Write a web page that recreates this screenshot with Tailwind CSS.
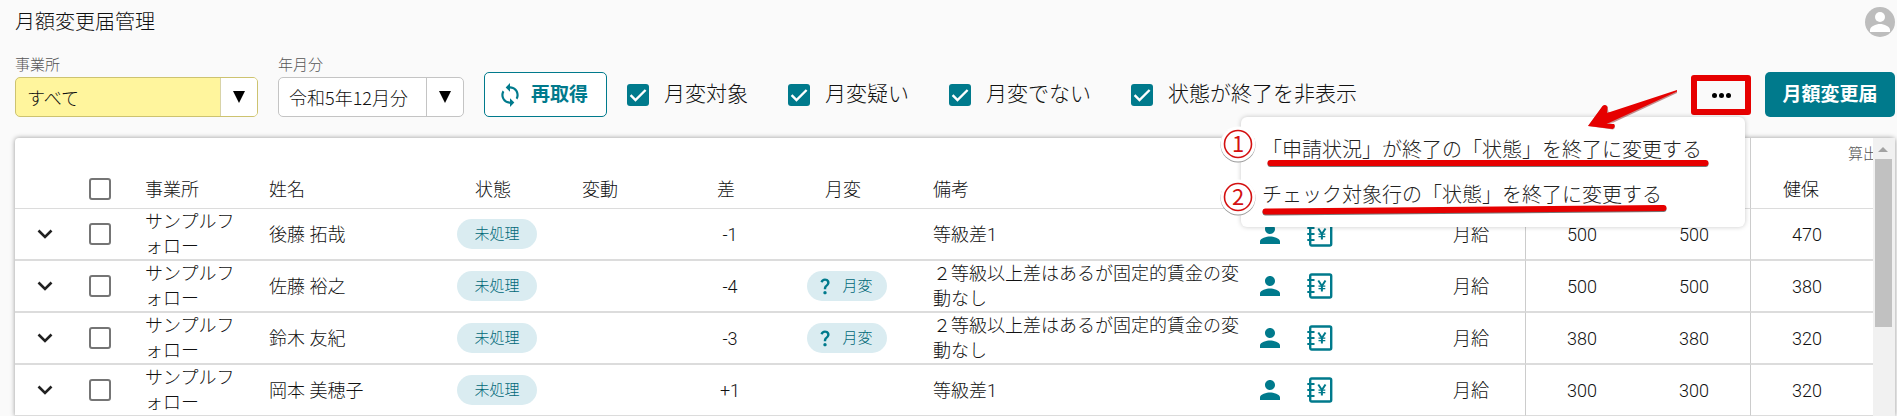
<!DOCTYPE html>
<html lang="ja">
<head>
<meta charset="utf-8">
<title>月額変更届管理</title>
<script src="https://cdn.jsdelivr.net/npm/@tailwindcss/browser@4"></script>
</head>
<body class="min-h-screen overflow-hidden bg-[#fafafa] font-['Roboto','Noto_Sans_CJK_JP',sans-serif] font-light text-[#111]">

<svg class="hidden" aria-hidden="true">
  <symbol id="chevron" viewBox="0 0 16 10"><path d="M1.5 1.5 8 8l6.500-6.500" fill="none" stroke="#212121" stroke-width="2.600"/></symbol>
  <symbol id="person" viewBox="0 0 24 24"><path fill="#007a8c" d="M12 12c2.21 0 4-1.79 4-4s-1.79-4-4-4-4 1.79-4 4 1.79 4 4 4zm0 2c-2.67 0-8 1.34-8 4v2h16v-2c0-2.66-5.33-4-8-4z"/></symbol>
  <symbol id="ledger" viewBox="0 0 26 26">
    <rect x="3.200" y="1.500" width="21" height="23" rx="1.500" fill="none" stroke="#007a8c" stroke-width="2.400"/>
    <path d="M.3 7H7.500M.3 13H7.500M.3 19H7.500" stroke="#007a8c" stroke-width="2"/>
    <path d="M11.300 7.500l3.600 5.500 3.600-5.500M14.900 12.500V18.500" fill="none" stroke="#007a8c" stroke-width="2"/>
    <path d="M11.500 13.200h6.800M11.500 15.700h6.800" stroke="#007a8c" stroke-width="1.200"/>
  </symbol>
  <symbol id="question" viewBox="0 0 24 24"><path fill="#007a8c" d="M11.070 12.850c.77-1.390 2.250-2.210 3.110-3.440.91-1.290.4-3.700-2.180-3.700-1.690 0-2.520 1.280-2.870 2.340L6.540 6.960C7.250 4.830 9.180 3 11.990 3c2.350 0 3.960 1.070 4.780 2.410.7 1.150 1.110 3.300.03 4.900-1.200 1.770-2.350 2.310-2.970 3.450-.25.46-.35.76-.35 2.240h-2.890c-.01-.78-.13-2.050.48-3.150zM14 20c0 1.100-.9 2-2 2s-2-.9-2-2 .9-2 2-2 2 .9 2 2z"/></symbol>
  <symbol id="tick" viewBox="0 0 22 22"><path d="M3.600 11.200l4.900 4.900L18.600 6" fill="none" stroke="#fff" stroke-width="2.400"/></symbol>
  <symbol id="down" viewBox="0 0 12 12"><path d="M0 0h12L6 12z"/></symbol>
</svg>

<header class="flex h-[54px] items-start justify-between pt-[7px] pr-[2px] pl-[15px]">
  <h1 class="text-[20px] leading-[30px]">月額変更届管理</h1>
  <button type="button" aria-label="アカウント">
    <svg class="size-[30px]" viewBox="0 0 30 30"><circle cx="15" cy="15" r="15" fill="#bdbdbd"/><circle cx="15" cy="10" r="5" fill="#fff"/><path d="M5 25v-2c0-3.500 6-6 10-6s10 2.500 10 6v2z" fill="#fff"/></svg>
  </button>
</header>

<div class="flex items-end gap-5 pr-[2px] pl-[15px]">
  <div class="w-[243px]">
    <label for="office" class="block text-[15px] leading-[23px] text-[#555]">事業所</label>
    <div class="flex h-10 overflow-hidden rounded-[5px] border border-[#cdc370] bg-[#fff59d]">
      <select id="office" class="min-w-0 flex-1 appearance-none pl-[11px] font-['Noto_Sans_CJK_JP',sans-serif] text-[18px]"><option>すべて</option></select>
      <span class="flex w-[37px] items-center justify-center border-l border-[#d8d3a8] bg-white"><svg class="size-3"><use href="#down"/></svg></span>
    </div>
  </div>
  <div class="w-[186px]">
    <label for="month" class="block text-[15px] leading-[23px] text-[#555]">年月分</label>
    <div class="flex h-10 overflow-hidden rounded-[5px] border border-[#c4c4c4] bg-white">
      <select id="month" class="min-w-0 flex-1 appearance-none pl-[10px] font-['Noto_Sans_CJK_JP',sans-serif] text-[18px]"><option>令和5年12月分</option></select>
      <span class="flex w-[37px] items-center justify-center border-l border-[#c4c4c4]"><svg class="size-3"><use href="#down"/></svg></span>
    </div>
  </div>
  <button type="button" class="flex h-[45px] w-[123px] items-center gap-2 rounded-[5px] border border-[#007a8c] bg-white pt-px pl-3 text-[19px] font-bold text-[#007a8c]">
    <svg class="size-[26px]" viewBox="0 0 24 24" fill="currentColor"><path d="M12 4V1L8 5l4 4V6c3.310 0 6 2.690 6 6 0 1.010-.25 1.970-.7 2.800l1.460 1.460C19.540 15.030 20 13.570 20 12c0-4.420-3.580-8-8-8zm0 14c-3.310 0-6-2.690-6-6 0-1.010.25-1.970.7-2.800L5.240 7.740C4.460 8.970 4 10.430 4 12c0 4.420 3.580 8 8 8v3l4-4-4-4v3z"/></svg>
    再取得
  </button>
  <div class="flex h-[45px] items-center gap-10 text-[21px]">
    <label class="flex items-center gap-[15px]"><span class="grid"><input type="checkbox" checked class="col-start-1 row-start-1 size-[22px] appearance-none rounded-[3px] bg-[#007a8c]"><svg class="pointer-events-none col-start-1 row-start-1 size-[22px]"><use href="#tick"/></svg></span>月変対象</label>
    <label class="flex items-center gap-[15px]"><span class="grid"><input type="checkbox" checked class="col-start-1 row-start-1 size-[22px] appearance-none rounded-[3px] bg-[#007a8c]"><svg class="pointer-events-none col-start-1 row-start-1 size-[22px]"><use href="#tick"/></svg></span>月変疑い</label>
    <label class="flex items-center gap-[15px]"><span class="grid"><input type="checkbox" checked class="col-start-1 row-start-1 size-[22px] appearance-none rounded-[3px] bg-[#007a8c]"><svg class="pointer-events-none col-start-1 row-start-1 size-[22px]"><use href="#tick"/></svg></span>月変でない</label>
    <label class="flex items-center gap-[15px]"><span class="grid"><input type="checkbox" checked class="col-start-1 row-start-1 size-[22px] appearance-none rounded-[3px] bg-[#007a8c]"><svg class="pointer-events-none col-start-1 row-start-1 size-[22px]"><use href="#tick"/></svg></span>状態が終了を非表示</label>
  </div>

  <div class="ml-auto flex gap-[14px]">
    <div class="relative z-10 pt-[3px]">
      <button type="button" aria-label="その他の操作" aria-expanded="true" class="flex h-10 w-[60px] items-center justify-center gap-[2px] rounded-[3px] border-[6px] border-[#e60000] bg-[#fafafa]">
        <span class="size-[5px] rounded-full bg-black"></span><span class="size-[5px] rounded-full bg-black"></span><span class="size-[5px] rounded-full bg-black"></span>
      </button>
      <div class="absolute top-[45px] right-[6px] w-[504px] rounded-md bg-white py-[10px] text-[20px] text-[#222] shadow-[0_0_5px_rgba(0,0,0,0.22)]" role="menu">
        <button type="button" role="menuitem" class="block h-[45px] w-full pl-[21px] text-left whitespace-nowrap">「申請状況」が終了の「状態」を終了に変更する</button>
        <button type="button" role="menuitem" class="block h-[45px] w-full pl-[21px] text-left whitespace-nowrap">チェック対象行の「状態」を終了に変更する</button>
        <svg class="pointer-events-none absolute inset-0 size-full overflow-visible" viewBox="1241 117 504 110">
          <g stroke-linecap="round" fill="none">
            <path d="M1270.500 164h435M1265.500 212.500l398-3.500" stroke="#777" stroke-width="6"/>
            <path d="M1270.500 163h435M1265.500 211.500l398-3.500" stroke="#e60000" stroke-width="6"/>
          </g>
          <path d="M1677 91 1611 114l1-1.500 -3.500-.5 -1-5.500q-2.500-3-5 0L1588 126l25 3.500q3-1.500 1.500-5l-5-1.500 4-.5L1677 93z" fill="#8a2020" opacity=".5"/>
          <path d="M1677 90 1607 113l.5-6q-2-3.500-5-1L1588 126l24.500 3q3.500-2 1.500-5h-7.500L1677 91.500z" fill="#e60000"/>
          <g font-size="22" font-weight="400" text-anchor="middle" fill="#d41111">
            <circle cx="1238" cy="145" r="17.500" fill="#999"/><circle cx="1238" cy="144" r="17.500" fill="#fff"/>
            <circle cx="1238" cy="144" r="13.500" fill="#fff" stroke="#d41111" stroke-width="1.600"/>
            <text x="1238" y="152" font-family="Noto Sans CJK JP">1</text>
            <circle cx="1238" cy="198" r="17.500" fill="#999"/><circle cx="1238" cy="197" r="17.500" fill="#fff"/>
            <circle cx="1238" cy="197" r="13.500" fill="#fff" stroke="#d41111" stroke-width="1.600"/>
            <text x="1238" y="205" font-family="Noto Sans CJK JP">2</text>
          </g>
        </svg>
      </div>
    </div>
    <button type="button" class="h-[45px] w-[130px] rounded-[5px] bg-[#007a8c] pt-[2px] text-[19px] font-bold text-white">月額変更届</button>
  </div>
</div>

<main class="mt-[21px] mr-[2px] ml-[15px] flex rounded-t-[4px] bg-white shadow-[0_0_5px_rgba(0,0,0,0.4)]">
  <div class="min-w-0 flex-1 overflow-hidden">
    <table class="w-[calc(100%+102px)] table-fixed border-separate border-spacing-0 text-[18px] leading-[25px] [line-break:anywhere] [&_tbody_td]:h-[52px] [&_tbody_td]:border-y [&_tbody_td]:border-[#dcdcdc] [&_td]:p-0 [&_th]:p-0 [&_th]:font-light">
      <colgroup>
        <col class="w-[60px]"><col class="w-[50px]"><col class="w-[124px]"><col class="w-[200px]"><col class="w-[96px]"><col class="w-[118px]"><col class="w-[134px]"><col class="w-[100px]"><col><col class="w-[44px]"><col class="w-[56px]"><col class="w-[177px]"><col class="w-[113px]"><col class="w-[112px]"><col class="w-[113px]"><col class="w-[112px]">
      </colgroup>
      <thead>
        <tr class="h-8 text-[15px] text-[#555]">
          <td colspan="12"></td>
          <td colspan="2" class="border-l border-[#ccc]"></td>
          <th colspan="2" scope="colgroup" class="border-l border-[#ccc]">算出</th>
        </tr>
        <tr class="h-[38px]">
          <td></td>
          <td><input type="checkbox" aria-label="すべて選択" class="mx-auto block size-[22px] appearance-none rounded-[3px] border-2 border-[#757575] bg-white"></td>
          <th scope="col"><div class="pl-5 text-left">事業所</div></th>
          <th scope="col"><div class="pl-5 text-left">姓名</div></th>
          <th scope="col"><div class="pr-2">状態</div></th>
          <th scope="col"><div class="pr-2">変動</div></th>
          <th scope="col"><div class="pr-2">差</div></th>
          <th scope="col"><div class="pr-2">月変</div></th>
          <th scope="col"><div class="pl-9 text-left">備考</div></th>
          <td></td><td></td><td></td>
          <td class="border-l border-[#ccc]"></td><td></td>
          <th scope="col" class="border-l border-[#ccc]"><div class="pr-3">健保</div></th>
          <td></td>
        </tr>
      </thead>
      <tbody id="rows"></tbody>
    </table>
  </div>
  <div class="flex w-[22px] flex-col items-center bg-[#f1f1f1] pr-[2px]">
    <svg class="mt-[9px] mb-[7px] h-[5px] w-[10px]" viewBox="0 0 10 5"><path d="M0 5h10L5 0z" fill="#a3a3a3"/></svg>
    <div class="h-[168px] w-[17px] bg-[#c1c1c1]"></div>
  </div>
</main>

<template id="row">
  <tr>
    <td><button type="button" aria-label="詳細を開く" class="mx-auto block"><svg class="h-[10px] w-4"><use href="#chevron"/></svg></button></td>
    <td><input type="checkbox" class="mx-auto block size-[22px] appearance-none rounded-[3px] border-2 border-[#757575] bg-white"></td>
    <td><div class="pr-3 pl-5">サンプルフォロー</div></td>
    <td><div class="pl-5" data-f="name"></div></td>
    <td><span class="mx-auto flex h-[30px] w-20 items-center justify-center rounded-full bg-[#daecf1] text-[15px] text-[#006878]">未処理</span></td>
    <td></td>
    <td class="text-center" data-f="diff"></td>
    <td><span data-pill class="mx-auto flex h-[30px] w-20 items-center justify-center gap-[7px] rounded-full bg-[#daecf1] pr-[6px] text-[15px] text-[#006878]"><svg class="size-5"><use href="#question"/></svg>月変</span></td>
    <td><div class="pr-2 pl-9" data-f="note"></div></td>
    <td><button type="button" aria-label="社員情報" class="mx-auto block"><svg class="size-[30px]"><use href="#person"/></svg></button></td>
    <td><button type="button" aria-label="給与台帳" class="mx-auto block"><svg class="size-[26px]"><use href="#ledger"/></svg></button></td>
    <td><div class="pr-9 text-right">月給</div></td>
    <td class="border-l border-l-[#ccc]! text-center" data-f="a"></td>
    <td class="text-center" data-f="b"></td>
    <td class="border-l border-l-[#ccc]! text-center" data-f="c"></td>
    <td></td>
  </tr>
</template>
<script>
  const people = [
    { name: '後藤 拓哉', diff: '-1', note: '等級差1', a: 500, b: 500, c: 470 },
    { name: '佐藤 裕之', diff: '-4', note: '２等級以上差はあるが固定的賃金の変動なし', a: 500, b: 500, c: 380, pill: true },
    { name: '鈴木 友紀', diff: '-3', note: '２等級以上差はあるが固定的賃金の変動なし', a: 380, b: 380, c: 320, pill: true },
    { name: '岡本 美穂子', diff: '+1', note: '等級差1', a: 300, b: 300, c: 320 }
  ];
  const tpl = document.getElementById('row');
  for (const p of people) {
    const r = tpl.content.cloneNode(true);
    r.querySelectorAll('[data-f]').forEach(e => { e.textContent = p[e.dataset.f]; });
    r.querySelector('input').setAttribute('aria-label', p.name + 'を選択');
    if (!p.pill) r.querySelector('[data-pill]').remove();
    document.getElementById('rows').append(r);
  }
</script>
</body>
</html>
